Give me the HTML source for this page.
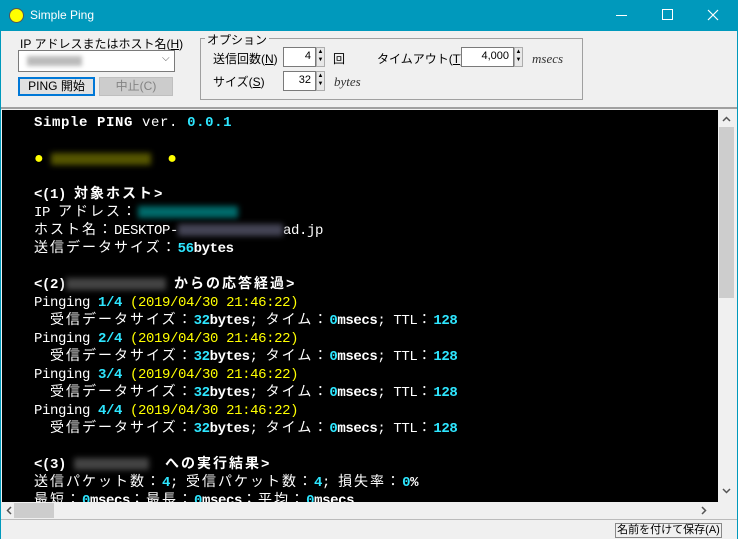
<!DOCTYPE html>
<html><head><meta charset="utf-8"><style>
*{margin:0;padding:0;box-sizing:border-box}
body{width:738px;height:539px;overflow:hidden;background:#f0f0f0;font-family:"Liberation Sans","Noto Sans CJK JP",sans-serif;font-size:12px;color:#000;position:relative}
.a{position:absolute}
.tb{left:0;top:0;width:738px;height:31px;background:#0099bc;color:#fff}
.in{background:#fff;border:1px solid #7a7a7a;text-align:right;padding-right:4px;font-size:11px;line-height:17px}
.sp{width:9px;border:1px solid #adadad;background:#e8e8e8;font-size:6px;line-height:8px;text-align:center}
.con{left:2px;top:110px;width:716px;height:392px;background:#000;overflow:hidden;font-family:"Liberation Mono","Noto Sans CJK JP",monospace;font-size:14px;letter-spacing:-0.4px;color:#fff}
.l{position:absolute;white-space:pre;line-height:18px}
.j{font-size:14px;letter-spacing:2px}
.c{color:#2ee6ff}.y{color:#ffff00}.b{font-weight:bold}
.bl{display:inline-block;height:12px;vertical-align:middle;filter:blur(3px)}
</style></head><body>
<div class="a tb">
 <div class="a" style="left:9px;top:8px;width:15px;height:15px;border-radius:50%;background:#ffff00;border:1px solid #555"></div>
 <div class="a" style="left:30px;top:8px;font-size:12px">Simple Ping</div>
 <div class="a" style="left:616px;top:15px;width:11px;height:1px;background:#fff"></div>
 <div class="a" style="left:662px;top:9px;width:11px;height:11px;border:1px solid #fff"></div>
 <svg class="a" style="left:707px;top:9px" width="12" height="12"><path d="M1 1L11 11M11 1L1 11" stroke="#fff" stroke-width="1.2"/></svg>
</div>
<div class="a" style="left:0;top:31px;width:1px;height:508px;background:#0099bc"></div>
<div class="a" style="left:737px;top:31px;width:1px;height:508px;background:#0099bc"></div>
<div class="a" style="left:20px;top:35px">IP アドレスまたはホスト名(<u>H</u>)</div>
<div class="a" style="left:18px;top:50px;width:157px;height:22px;background:#fff;border:1px solid #7a7a7a"><div class="a" style="left:8px;top:5px;width:55px;height:10px;background:#bbb;filter:blur(2px)"></div><div class="a" style="left:143px;top:2px;font-size:10px;color:#555">⌵</div></div>
<div class="a" style="left:18px;top:77px;width:77px;height:19px;border:2px solid #0078d7;background:#e1e1e1;text-align:center;line-height:15px">PING 開始</div>
<div class="a" style="left:99px;top:77px;width:74px;height:19px;border:1px solid #bfbfbf;background:#ccc;color:#838383;text-align:center;line-height:17px">中止(C)</div>
<div class="a" style="left:200px;top:38px;width:383px;height:62px;border:1px solid #a0a0a0"></div>
<div class="a" style="left:205px;top:31px;background:#f0f0f0;padding:0 2px">オプション</div>
<div class="a" style="left:213px;top:50px">送信回数(<u>N</u>)</div>
<div class="a in" style="left:283px;top:47px;width:33px;height:20px">4</div>
<div class="a sp" style="left:316px;top:47px;height:20px">▲<br>▼</div>
<div class="a" style="left:333px;top:50px">回</div>
<div class="a" style="left:213px;top:73px">サイズ(<u>S</u>)</div>
<div class="a in" style="left:283px;top:71px;width:33px;height:20px">32</div>
<div class="a sp" style="left:316px;top:71px;height:20px">▲<br>▼</div>
<div class="a" style="left:334px;top:74px;font-style:italic;font-family:'Liberation Serif',serif;font-size:13px;color:#333">bytes</div>
<div class="a" style="left:377px;top:50px">タイムアウト(<u>T</u>)</div>
<div class="a in" style="left:461px;top:47px;width:53px;height:20px">4,000</div>
<div class="a sp" style="left:514px;top:47px;height:20px">▲<br>▼</div>
<div class="a" style="left:532px;top:51px;font-style:italic;font-family:'Liberation Serif',serif;font-size:13px;color:#333">msecs</div>
<div class="a" style="left:1px;top:107px;width:736px;height:2px;background:#a0a0a0"></div>
<div class="a con">
<div class="l b" style="left:32px;top:4px;letter-spacing:0.6px">Simple PING <span style="font-weight:normal">ver.</span> <span class="c">0.0.1</span></div>
<div class="l" style="left:32px;top:40px"><span class="y" style="font-size:16px">●</span><span class="bl" style="width:100px;margin-left:8px;background:#555500"></span>  <span class="y" style="font-size:16px">●</span></div>
<div class="l b" style="left:32px;top:76px">&lt;(1) <span class="j">対象ホスト</span>&gt;</div>
<div class="l" style="left:32px;top:94px">IP <span class="j">アドレス：</span><span class="bl" style="width:100px;background:#006a6a"></span></div>
<div class="l" style="left:32px;top:112px"><span class="j">ホスト名：</span>DESKTOP-<span class="bl" style="width:105px;background:#445"></span>ad.jp</div>
<div class="l" style="left:32px;top:130px"><span class="j">送信データサイズ：</span><span class="c b">56</span><span class="b">bytes</span></div>
<div class="l b" style="left:32px;top:166px">&lt;(2)<span class="bl" style="width:100px;background:#444"></span> <span class="j">からの応答経過</span>&gt;</div>
<div class="l" style="left:32px;top:184px">Pinging <span class="c b">1/4</span> <span class="y">(2019/04/30 21:46:22)</span></div>
<div class="l" style="left:48px;top:202px"><span class="j">受信データサイズ：</span><span class="c b">32</span><span class="b">bytes</span>; <span class="j">タイム：</span><span class="c b">0</span><span class="b">msecs</span>; TTL<span class="j">：</span><span class="c b">128</span></div>
<div class="l" style="left:32px;top:220px">Pinging <span class="c b">2/4</span> <span class="y">(2019/04/30 21:46:22)</span></div>
<div class="l" style="left:48px;top:238px"><span class="j">受信データサイズ：</span><span class="c b">32</span><span class="b">bytes</span>; <span class="j">タイム：</span><span class="c b">0</span><span class="b">msecs</span>; TTL<span class="j">：</span><span class="c b">128</span></div>
<div class="l" style="left:32px;top:256px">Pinging <span class="c b">3/4</span> <span class="y">(2019/04/30 21:46:22)</span></div>
<div class="l" style="left:48px;top:274px"><span class="j">受信データサイズ：</span><span class="c b">32</span><span class="b">bytes</span>; <span class="j">タイム：</span><span class="c b">0</span><span class="b">msecs</span>; TTL<span class="j">：</span><span class="c b">128</span></div>
<div class="l" style="left:32px;top:292px">Pinging <span class="c b">4/4</span> <span class="y">(2019/04/30 21:46:22)</span></div>
<div class="l" style="left:48px;top:310px"><span class="j">受信データサイズ：</span><span class="c b">32</span><span class="b">bytes</span>; <span class="j">タイム：</span><span class="c b">0</span><span class="b">msecs</span>; TTL<span class="j">：</span><span class="c b">128</span></div>
<div class="l b" style="left:32px;top:346px">&lt;(3) <span class="bl" style="width:75px;background:#444"></span>  <span class="j">への実行結果</span>&gt;</div>
<div class="l" style="left:32px;top:364px"><span class="j">送信パケット数：</span><span class="c b">4</span>; <span class="j">受信パケット数：</span><span class="c b">4</span>; <span class="j">損失率：</span><span class="c b">0</span><span class="b">%</span></div>
<div class="l" style="left:32px;top:382px"><span class="j">最短：</span><span class="c b">0</span><span class="b">msecs</span><span class="j">；最長：</span><span class="c b">0</span><span class="b">msecs</span><span class="j">；平均：</span><span class="c b">0</span><span class="b">msecs</span></div>
</div>
<div class="a" style="left:718px;top:110px;width:17px;height:392px;background:#f0f0f0">
 <svg class="a" style="left:4px;top:6px" width="9" height="6"><path d="M1 5L4.5 1.5L8 5" stroke="#555" stroke-width="1.5" fill="none"/></svg>
 <div class="a" style="left:1px;top:17px;width:15px;height:171px;background:#cdcdcd"></div>
 <svg class="a" style="left:4px;top:378px" width="9" height="6"><path d="M1 1L4.5 4.5L8 1" stroke="#555" stroke-width="1.5" fill="none"/></svg>
</div>
<div class="a" style="left:1px;top:502px;width:736px;height:17px;background:#f0f0f0">
 <svg class="a" style="left:5px;top:4px" width="6" height="9"><path d="M5 1L1.5 4.5L5 8" stroke="#555" stroke-width="1.5" fill="none"/></svg>
 <div class="a" style="left:13px;top:1px;width:40px;height:15px;background:#cdcdcd"></div>
 <svg class="a" style="left:700px;top:4px" width="6" height="9"><path d="M1 1L4.5 4.5L1 8" stroke="#555" stroke-width="1.5" fill="none"/></svg>
</div>
<div class="a" style="left:1px;top:519px;width:736px;height:1px;background:#bbb"></div>
<div class="a" style="left:615px;top:523px;width:107px;height:15px;border:1px solid #888;font-size:11px;line-height:13px;text-align:center;background:#f0f0f0">名前を付けて保存(A)</div>
</body></html>
